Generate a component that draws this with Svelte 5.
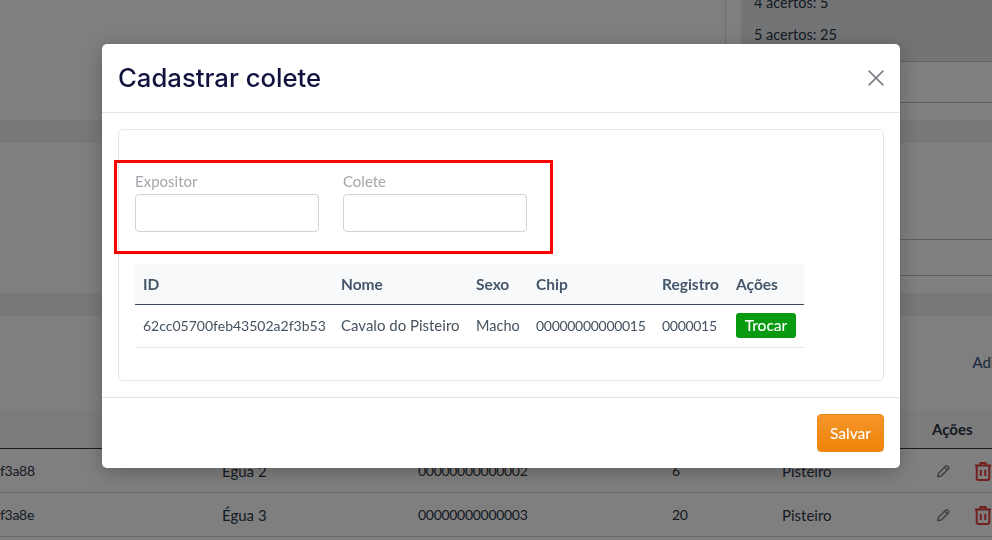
<script lang="ts">
  let expositor = $state("");
  let colete = $state("");

  const bgRows = [
    { id: "f3a88", nome: "Égua 2", chip: "00000000000002", num: "6", tipo: "Pisteiro" },
    { id: "f3a8e", nome: "Égua 3", chip: "00000000000003", num: "20", tipo: "Pisteiro" },
  ];

  const animal = {
    id: "62cc05700feb43502a2f3b53",
    nome: "Cavalo do Pisteiro",
    sexo: "Macho",
    chip: "00000000000015",
    registro: "0000015",
  };
</script>

<div class="page">
  <div class="top">
    <div class="acertos">
      <p>4 acertos: 5</p>
      <p>5 acertos: 25</p>
    </div>
  </div>
  <div class="right-line h-41"></div>
  <div class="band first"></div>
  <div class="right-line h-97"></div>
  <div class="right-line h-36"></div>
  <div class="band second"></div>
  <div class="add-row"><span>Adicionar</span></div>

  <div class="bg-row bg-head">
    <span></span><span></span><span></span><span></span><span></span>
    <strong>Ações</strong>
  </div>
  {#each bgRows as row}
    <div class="bg-row">
      <span class="digits">{row.id}</span>
      <span>{row.nome}</span>
      <span class="digits">{row.chip}</span>
      <span class="digits">{row.num}</span>
      <span>{row.tipo}</span>
      <div class="bg-icons">
        <svg width="15" height="14" viewBox="0 0 16 16" fill="none" stroke="#7a8089" stroke-width="1.7" stroke-linejoin="round">
          <path d="M1.5 14.5l.9-4 8.2-8.2a1.4 1.4 0 0 1 2 0l1.1 1.1a1.4 1.4 0 0 1 0 2l-8.2 8.2z" />
          <path d="M9.4 3.6l3 3" />
        </svg>
        <svg width="18" height="20" viewBox="0 0 20 22" fill="none" stroke="#e0403f" stroke-width="2.2" stroke-linejoin="round">
          <path d="M1 5h18M7 5V2h6v3M3 5v14a2 2 0 0 0 2 2h10a2 2 0 0 0 2-2V5" />
          <path d="M7.5 9.5v7M12.5 9.5v7" />
        </svg>
      </div>
    </div>
  {/each}
</div>

<div class="backdrop">
  <div class="modal">
    <header>
      <h2>Cadastrar colete</h2>
      <button class="close" aria-label="Fechar">
        <svg width="16" height="16" viewBox="0 0 16 16" fill="none" stroke="#7b7f86" stroke-width="1.6">
          <path d="M0.6 0.6l14.8 14.8M15.4 0.6L0.6 15.4" />
        </svg>
      </button>
    </header>

    <div class="body">
      <div class="card">
        <div class="fields">
          <label>
            <span>Expositor</span>
            <input type="text" bind:value={expositor} />
          </label>
          <label>
            <span>Colete</span>
            <input type="text" bind:value={colete} />
          </label>
          <div class="highlight"></div>
        </div>

        <table>
          <thead>
            <tr>
              <th class="c-id">ID</th>
              <th class="c-nome">Nome</th>
              <th class="c-sexo">Sexo</th>
              <th class="c-chip">Chip</th>
              <th class="c-reg">Registro</th>
              <th>Ações</th>
            </tr>
          </thead>
          <tbody>
            <tr>
              <td class="digits">{animal.id}</td>
              <td class="wide">{animal.nome}</td>
              <td>{animal.sexo}</td>
              <td class="digits">{animal.chip}</td>
              <td class="digits">{animal.registro}</td>
              <td><button class="trocar">Trocar</button></td>
            </tr>
          </tbody>
        </table>
      </div>
    </div>

    <footer>
      <button class="salvar">Salvar</button>
    </footer>
  </div>
</div>

<style>
  :global(body) {
    margin: 0;
    background: #fff;
    font-family: "Lato", "Open Sans", sans-serif;
    font-size: 15px;
    color: #2d3748;
  }

  .page {
    height: 540px;
    overflow: hidden;
  }

  .top {
    height: 61px;
    margin-left: 725px;
    padding-left: 15px;
    border-left: 1px solid #d8dadd;
    border-bottom: 1px solid #c0c3c8;
    display: flex;
    align-items: flex-end;
    overflow: hidden;
  }

  .acertos {
    flex: 1;
    background: #e6e8ec;
    padding: 0 13px 16px;
    display: flex;
    flex-direction: column;
    gap: 12px;
    font-size: 14.5px;
  }

  .acertos p {
    margin: 0;
    line-height: 20px;
  }

  .right-line {
    margin-left: 725px;
    border-bottom: 1px solid #b9bcc2;
  }

  .h-41 {
    height: 40px;
  }

  .h-97 {
    height: 96px;
  }

  .h-36 {
    height: 35px;
  }

  .band {
    height: 23px;
    background: #eff2f1;
  }

  .band.first,
  .band.second {
    margin-top: 17px;
  }

  .add-row {
    height: 94px;
    display: flex;
    justify-content: flex-end;
    overflow: hidden;
    white-space: nowrap;
  }

  .add-row span {
    margin-top: 37px;
    margin-right: -43px;
    color: #34507a;
  }

  .bg-row {
    height: 43px;
    display: grid;
    grid-template-columns: 222px 196px 254px 110px 150px 1fr;
    align-items: center;
    border-bottom: 1px solid #d0d2d6;
  }

  .bg-head {
    height: 38px;
    background: #f7f9f7;
    border-bottom: 1px solid #2d3748;
  }

  .bg-icons {
    display: flex;
    align-items: center;
    gap: 23px;
    padding-left: 4px;
  }

  .digits {
    font-size: 14px;
    letter-spacing: -0.3px;
  }

  td.digits:first-child {
    letter-spacing: 0;
  }

  .backdrop {
    position: fixed;
    inset: 0;
    padding-left: 10px;
    background: rgba(0, 0, 0, 0.5);
    display: flex;
    justify-content: center;
    align-items: flex-start;
    padding-top: 44px;
  }

  .modal {
    width: 798px;
    background: #fff;
    border-radius: 5px;
    box-shadow: 0 4px 20px rgba(0, 0, 0, 0.25);
  }

  header {
    height: 68px;
    padding: 0 16px;
    display: flex;
    align-items: center;
    justify-content: space-between;
    border-bottom: 1px solid #e2e4ea;
  }

  h2 {
    margin: 0 0 2px;
    font-family: "Inter", sans-serif;
    font-size: 25.7px;
    font-weight: 500;
    color: #12123f;
  }

  .close {
    padding: 0;
    border: 0;
    background: none;
    display: flex;
  }

  .body {
    padding: 16px;
    border-bottom: 1px solid #e2e4ea;
  }

  .card {
    box-sizing: border-box;
    height: 252px;
    padding: 41px 16px 0;
    border: 1px solid #e2e4e8;
    border-radius: 5px;
  }

  .fields {
    position: relative;
    display: flex;
    gap: 24px;
  }

  label {
    width: 184px;
    display: flex;
    flex-direction: column;
    gap: 3px;
  }

  label span {
    color: #a3a6ab;
    font-size: 15px;
    line-height: 20px;
  }

  input {
    height: 38px;
    box-sizing: border-box;
    width: 100%;
    border: 1px solid #ced2da;
    border-radius: 4px;
    background: #fff;
  }

  .highlight {
    position: absolute;
    left: -21px;
    top: -11px;
    width: 433px;
    height: 88px;
    border: 3px solid #fe0000;
  }

  table {
    margin-top: 32px;
    width: 669px;
    table-layout: fixed;
    border-collapse: collapse;
    font-size: 14.5px;
  }

  th {
    height: 40px;
    padding: 0 8px;
    text-align: left;
    font-size: 15.5px;
    font-weight: 700;
    color: #46566a;
    background: #f7f9fb;
    border-bottom: 1px solid #3d4a5c;
  }

  td {
    height: 40px;
    padding: 0 8px 2px;
    color: #45525f;
    white-space: nowrap;
    border-bottom: 1px solid #e3e5e8;
  }

  td.wide {
    font-size: 15px;
  }

  .c-id {
    width: 182px;
  }

  .c-nome {
    width: 119px;
  }

  .c-sexo {
    width: 44px;
  }

  .c-chip {
    width: 110px;
  }

  .c-reg {
    width: 58px;
  }

  .trocar {
    height: 25px;
    width: 60px;
    padding: 0;
    border: 0;
    border-radius: 3px;
    background: #089b12;
    color: #fff;
    font: inherit;
    font-size: 15.5px;
    font-weight: 500;
  }

  footer {
    height: 70px;
    padding: 0 16px;
    display: flex;
    align-items: center;
    justify-content: flex-end;
  }

  .salvar {
    width: 67px;
    height: 38px;
    padding: 0;
    border: 1px solid #ef8a18;
    border-radius: 4px;
    background: linear-gradient(#f5952b, #ee8308);
    color: #fff;
    font: inherit;
    font-size: 15.5px;
    font-weight: 500;
  }
</style>
